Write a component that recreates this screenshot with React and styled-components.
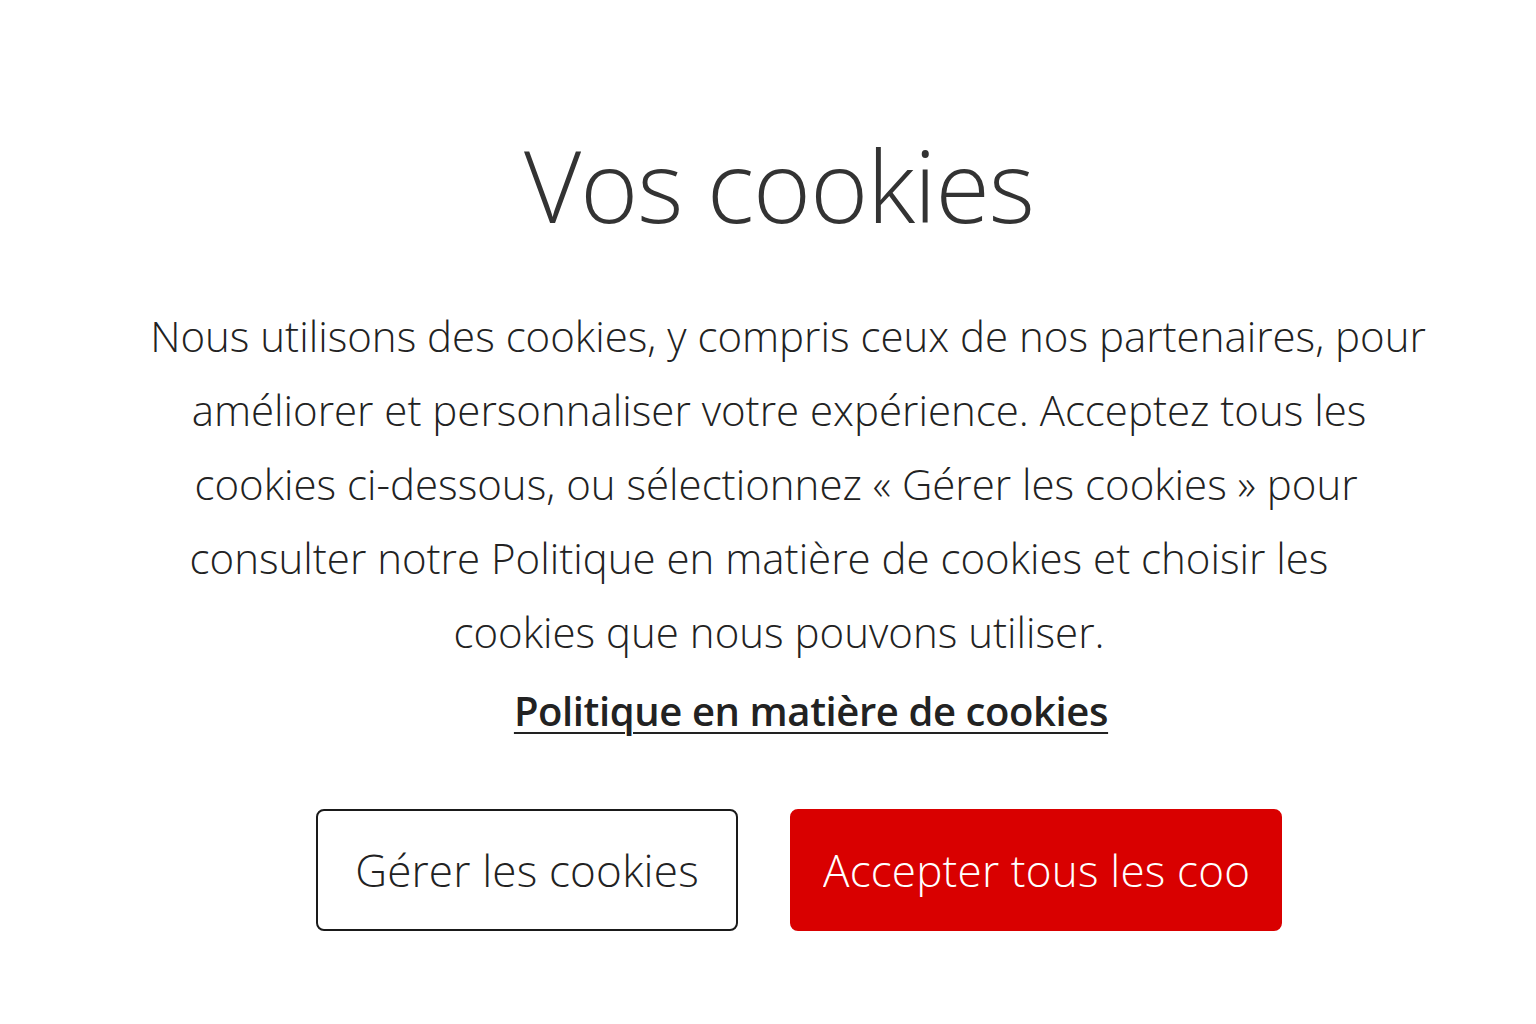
import React from 'react'
import styled, { createGlobalStyle } from 'styled-components'

const GlobalStyle = createGlobalStyle`
  body {
    margin: 0;
    background: #ffffff;
    font-family: "Open Sans", "Noto Sans", sans-serif;
  }
`

const Page = styled.div`
  display: flex;
  flex-direction: column;
  align-items: center;
  padding-top: 126px;
  padding-left: 22px;
`

const Title = styled.h1`
  margin: 0;
  font-size: 99px;
  font-weight: 300;
  color: #333333;
  line-height: 1.2;
  letter-spacing: -1px;
`

const Body = styled.p`
  margin: 54px 0 0;
  width: 1400px;
  font-size: 42px;
  font-weight: 300;
  line-height: 74px;
  color: #222222;
  text-align: center;
`

const Line = styled.span`
  display: block;
  margin-left: ${p => p.$shift || 0}px;
`

const PolicyLink = styled.a`
  margin-top: 12px;
  margin-left: 64px;
  font-size: 40px;
  font-weight: 600;
  color: #222222;
  text-decoration: underline;
  text-decoration-thickness: 2px;
  text-underline-offset: 6px;
  letter-spacing: -0.4px;
  line-height: 60px;
`

const Actions = styled.div`
  display: flex;
  gap: 52px;
  margin-top: 68px;
  margin-left: 40px;
`

const Button = styled.button`
  box-sizing: border-box;
  height: 122px;
  width: ${p => p.$width}px;
  padding: 0 31px;
  border-radius: 8px;
  border: 2px solid ${p => (p.$primary ? '#d90000' : '#1a1a1a')};
  background: ${p => (p.$primary ? '#d90000' : '#ffffff')};
  color: ${p => (p.$primary ? '#ffffff' : '#222222')};
  font-family: "Open Sans", "Noto Sans", sans-serif;
  font-size: 44px;
  font-weight: 300;
  letter-spacing: 0.2px;
`

const Label = styled.span`
  display: block;
  white-space: nowrap;
  overflow: hidden;
  text-align: center;
`

export default function App() {
  return (
    <>
      <GlobalStyle />
      <Page>
        <Title>Vos cookies</Title>
        <Body>
          <Line $shift={18}>Nous utilisons des cookies, y compris ceux de nos partenaires, pour</Line>
          <Line>améliorer et personnaliser votre expérience. Acceptez tous les</Line>
          <Line $shift={-6}>cookies ci-dessous, ou sélectionnez « Gérer les cookies » pour</Line>
          <Line $shift={-40}>consulter notre Politique en matière de cookies et choisir les</Line>
          <Line>cookies que nous pouvons utiliser.</Line>
        </Body>
        <PolicyLink href="#">Politique en matière de cookies</PolicyLink>
        <Actions>
          <Button $width={422}><Label>Gérer les cookies</Label></Button>
          <Button $width={492} $primary><Label>Accepter tous les cookies</Label></Button>
        </Actions>
      </Page>
    </>
  )
}
